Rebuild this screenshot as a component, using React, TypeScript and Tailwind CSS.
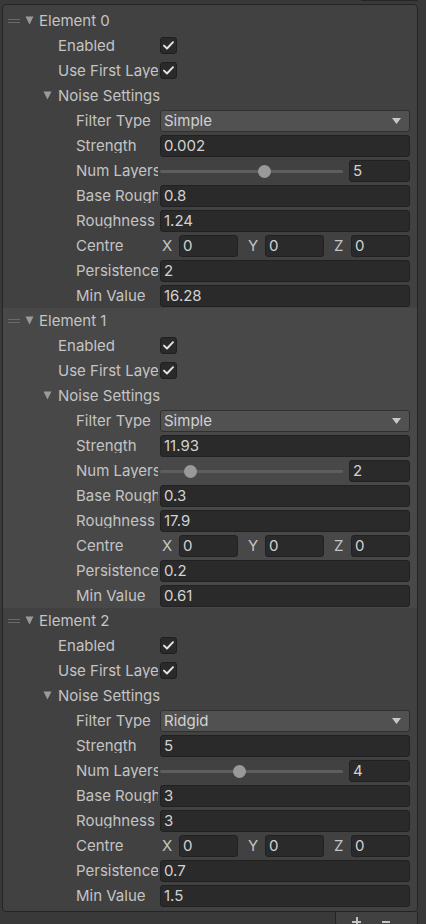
import type { ReactNode } from "react";

type Noise = {
  filter: string;
  strength: string;
  layers: number;
  baseRough: string;
  rough: string;
  centre: [string, string, string];
  persistence: string;
  minValue: string;
};

const elements: Noise[] = [
  { filter: "Simple", strength: "0.002", layers: 5, baseRough: "0.8", rough: "1.24", centre: ["0", "0", "0"], persistence: "2", minValue: "16.28" },
  { filter: "Simple", strength: "11.93", layers: 2, baseRough: "0.3", rough: "17.9", centre: ["0", "0", "0"], persistence: "0.2", minValue: "0.61" },
  { filter: "Ridgid", strength: "5", layers: 4, baseRough: "3", rough: "3", centre: ["0", "0", "0"], persistence: "0.7", minValue: "1.5" },
];

function Caret() {
  return (
    <svg width="9" height="9" viewBox="0 0 9 9" className="shrink-0">
      <path d="M0.5 0.5 H8.5 L4.5 8.5 Z" fill="#9a9a9a" />
    </svg>
  );
}

function Row({ indent, label, children }: { indent: string; label: string; children?: ReactNode }) {
  return (
    <div className="flex h-[25px] items-center">
      <div className={`${indent} w-[155px] shrink-0 overflow-hidden whitespace-nowrap text-[#c4c4c4]`}>
        <div className="overflow-hidden">{label}</div>
      </div>
      <div className="ml-[2px] flex w-[250px] items-center">{children}</div>
    </div>
  );
}

function Field({ value, className = "" }: { value: string; className?: string }) {
  return (
    <div
      className={`flex h-[22px] items-center rounded-[3px] border border-[#212121] bg-[#2a2a2a] pl-[3px] text-[#d2d2d2] ${className}`}
    >
      {value}
    </div>
  );
}

function Check() {
  return (
    <div className="flex h-[17px] w-[17px] items-center justify-center rounded-[3px] border border-[#1f1f1f] bg-[#2a2a2a]">
      <svg width="11" height="9" viewBox="0 0 11 9">
        <path d="M1 4.6 L4 7.5 L10 1.2" stroke="#e4e4e4" strokeWidth="1.9" fill="none" strokeLinecap="round" strokeLinejoin="round" />
      </svg>
    </div>
  );
}

function Element({ index, data, hilite }: { index: number; data: Noise; hilite: boolean }) {
  const pct = ((data.layers - 1) / 7) * 171;
  return (
    <div className={hilite ? "bg-[#484848]" : ""}>
      <div className="flex h-[25px] items-center">
        <div className="ml-[5px] flex w-[12px] flex-col gap-[2px]">
          <div className="h-[1px] bg-[#6a6a6a]" />
          <div className="h-[1px] bg-[#6a6a6a]" />
        </div>
        <div className="ml-[5px] mr-[5px]">
          <Caret />
        </div>
        <span className="text-[#c4c4c4]">Element {index}</span>
      </div>
      <Row indent="pl-[55px]" label="Enabled">
        <Check />
      </Row>
      <Row indent="pl-[55px]" label="Use First Layer as Mask">
        <Check />
      </Row>
      <div className="flex h-[25px] items-center pl-[40px]">
        <div className="mr-[6px]">
          <Caret />
        </div>
        <span className="text-[#c4c4c4]">Noise Settings</span>
      </div>
      <Row indent="pl-[73px]" label="Filter Type">
        <div className="flex h-[22px] w-full items-center justify-between rounded-[3px] border border-[#303030] bg-[#515151] pl-[3px] pr-[8px] text-[#d2d2d2]">
          <span>{data.filter}</span>
          <svg width="9" height="6" viewBox="0 0 9 6">
            <path d="M0 0 H9 L4.5 6 Z" fill="#c8c8c8" />
          </svg>
        </div>
      </Row>
      <Row indent="pl-[73px]" label="Strength">
        <Field value={data.strength} className="w-full" />
      </Row>
      <Row indent="pl-[73px]" label="Num Layers">
        <div className="relative h-[22px] w-[183px] shrink-0">
          <div className="absolute left-0 right-0 top-[10px] h-[3px] rounded-full bg-[#5e5e5e]" />
          <div
            className="absolute top-[5px] h-[13px] w-[13px] rounded-full bg-[#999999]"
            style={{ left: `${pct}px` }}
          />
        </div>
        <Field value={String(data.layers)} className="ml-[6px] flex-1" />
      </Row>
      <Row indent="pl-[73px]" label="Base Roughness">
        <Field value={data.baseRough} className="w-full" />
      </Row>
      <Row indent="pl-[73px]" label="Roughness">
        <Field value={data.rough} className="w-full" />
      </Row>
      <Row indent="pl-[73px]" label="Centre">
        <div className="flex w-full gap-[8px]">
          {["X", "Y", "Z"].map((axis, i) => (
            <div key={axis} className="flex flex-1 items-center">
              <span className="w-[19px] shrink-0 pl-[2px] text-[#c4c4c4]">{axis}</span>
              <Field value={data.centre[i]} className="flex-1" />
            </div>
          ))}
        </div>
      </Row>
      <Row indent="pl-[73px]" label="Persistence">
        <Field value={data.persistence} className="w-full" />
      </Row>
      <Row indent="pl-[73px]" label="Min Value">
        <Field value={data.minValue} className="w-full" />
      </Row>
    </div>
  );
}

export default function App() {
  return (
    <div
      className="h-[924px] w-[426px] overflow-hidden bg-[#393939] text-[15px] leading-none"
      style={{ fontFamily: "Inter, 'Noto Sans', sans-serif" }}
    >
      <div className="flex h-[4px] justify-end pr-[8px]">
        <div className="h-[1px] w-[57px] bg-[#262626]" />
      </div>
      <div className="ml-[2px] w-[416px] overflow-hidden rounded-[4px] border border-[#242424] bg-[#414141] py-[3px]">
        {elements.map((el, i) => (
          <Element key={i} index={i} data={el} hilite={i === 1} />
        ))}
      </div>
      <div className="flex justify-end pr-[8px]">
        <div className="flex h-[14px] w-[83px] items-start overflow-hidden rounded-b-[4px] border-x border-b border-[#242424] bg-[#414141] pl-[16px] pt-[5px]">
          {/* plus / minus buttons, cut by the window edge */}
          <div className="flex h-[10px] w-[9px] flex-col items-center">
            <div className="h-[4px] w-[2px] bg-[#c4c4c4]" />
            <div className="h-[2px] w-[9px] bg-[#c4c4c4]" />
            <div className="h-[4px] w-[2px] bg-[#c4c4c4]" />
          </div>
          <div className="ml-[21px] mt-[4px] h-[2px] w-[8px] bg-[#c4c4c4]" />
        </div>
      </div>
    </div>
  );
}
